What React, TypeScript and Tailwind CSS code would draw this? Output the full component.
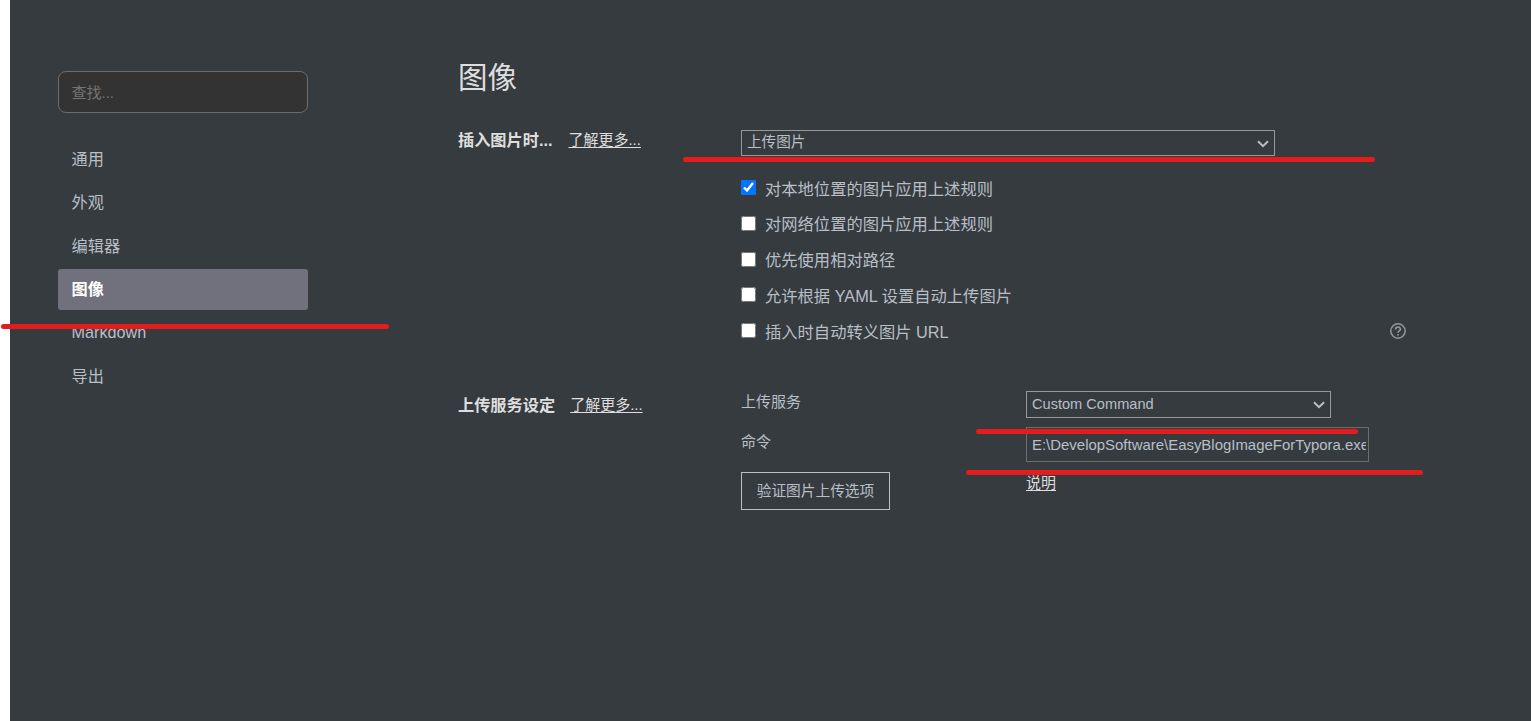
import { useState } from 'react';

const fontClass = "font-['Liberation_Sans','Noto_Sans_CJK_SC',sans-serif]";

const linkClass = 'text-[15px] leading-[20px] text-[#dedede] underline underline-offset-2';

const navItems = ['通用', '外观', '编辑器', '图像', 'Markdown', '导出'];

const imageRules = [
  { label: '对本地位置的图片应用上述规则', checked: true },
  { label: '对网络位置的图片应用上述规则', checked: false },
  { label: '优先使用相对路径', checked: false },
  { label: '允许根据 YAML 设置自动上传图片', checked: false },
  { label: '插入时自动转义图片 URL', checked: false, help: true }
];

// red marker strokes lying over the panel
const markers = [
  'left-[1px] top-[324px] w-[388px]',
  'left-[683px] top-[157px] w-[692px]',
  'left-[976px] top-[429px] w-[382px]',
  'left-[966px] top-[470px] w-[457px]'
];

function Chevron() {
  return (
    <svg className="mt-[2px] h-[8px] w-[12px] shrink-0" fill="none" viewBox="0 0 12 8">
      <path d="M1 1.2 L6 6.2 L11 1.2" stroke="#b8bfc6" strokeWidth="2" />
    </svg>
  );
}

function HelpIcon() {
  return (
    <svg className="size-4" fill="none" viewBox="0 0 16 16">
      <circle cx="8" cy="8" r="7.2" stroke="#93989d" strokeWidth="1.5" />
      <path
        d="M5.6 6.4 C5.6 3.2 10.4 3.2 10.4 6.2 C10.4 7.9 8 8 8 9.8"
        stroke="#93989d"
        strokeWidth="1.6"
      />
      <path d="M8 11 V12.6" stroke="#93989d" strokeWidth="1.6" />
    </svg>
  );
}

function Sidebar() {
  const [active, setActive] = useState('图像');

  return (
    <aside className="w-[250px] shrink-0 pt-[71px]">
      <input
        className="block h-[42px] w-full rounded-lg border border-[#6d6d6d] bg-[#333333] px-[12.5px] text-[15px] text-[#b8bfc6] outline-none placeholder:text-[#757575]"
        placeholder="查找..."
        type="text"
      />
      <nav className="mt-[26px] flex flex-col gap-[2.35px]">
        {navItems.map((item) => (
          <button
            className={`h-[41px] rounded-[3px] px-[13.6px] pb-[1px] text-left text-[16.2px] ${
              item === active ? 'bg-[#70717d] font-bold text-white' : 'text-[#b8bfc6]'
            }`}
            key={item}
            onClick={() => {
              setActive(item);
            }}
            type="button"
          >
            {item}
          </button>
        ))}
      </nav>
    </aside>
  );
}

export default function App() {
  return (
    <div className={`relative h-[721px] w-full overflow-hidden bg-white pl-[10px] text-[#b8bfc6] ${fontClass}`}>
      <div className="flex h-full bg-[#363b40] pl-[48px]">
        <Sidebar />

        <main className="ml-[150px] w-[960px] pt-[58px]">
          <h2 className="h-[72px] text-[29.5px] leading-[40px] text-[#dedede]">图像</h2>

          <section className="flex">
            <div className="flex w-[283px] shrink-0 items-start gap-[16px] self-start">
              <h3 className="text-[16.2px] leading-[21px] font-bold text-[#dedede]">插入图片时...</h3>
              <a className={linkClass}>了解更多...</a>
            </div>
            <div className="flex-1">
              <div className="flex h-[26px] w-[534px] items-center justify-between border border-[#96999c] pr-[5px] pl-[5px] text-[14.6px]">
                <span className="pb-[2px] leading-[22px]">上传图片</span>
                <Chevron />
              </div>
              <div className="mt-[15px]">
                {imageRules.map((rule) => (
                  <div className="flex h-[35.8px] items-center" key={rule.label}>
                    <label className="flex items-center gap-[9px] text-[16.3px]">
                      <input className="-mt-[2.6px] size-[15px]" defaultChecked={rule.checked} type="checkbox" />
                      {rule.label}
                    </label>
                    {rule.help && (
                      <span className="-mt-[2px] ml-auto mr-[12px]">
                        <HelpIcon />
                      </span>
                    )}
                  </div>
                ))}
              </div>
            </div>
          </section>

          <section className="mt-[41px] flex">
            <div className="mt-[4px] flex w-[283px] shrink-0 items-start gap-[15px] self-start">
              <h3 className="text-[16.2px] leading-[21px] font-bold text-[#dedede]">上传服务设定</h3>
              <a className={linkClass}>了解更多...</a>
            </div>
            <div className="w-[285px] shrink-0 text-[15px]">
              <p className="h-[40px] leading-[21px]">上传服务</p>
              <p className="h-[41px] leading-[21px]">命令</p>
              <button className="block h-[38px] w-[149px] border border-[#b8bfc6] text-[14.7px]" type="button">
                验证图片上传选项
              </button>
            </div>
            <div className="text-[15px]">
              <div className="flex h-[27px] w-[305px] items-center justify-between border border-[#96999c] px-[5px] text-[14.6px]">
                <span>Custom Command</span>
                <Chevron />
              </div>
              <input
                className="mt-[9px] block h-[35px] w-[343px] border border-[#6d6d6d] bg-transparent pr-[2px] pl-[5px] text-[14.95px] outline-none"
                defaultValue="E:\DevelopSoftware\EasyBlogImageForTypora.exe"
                type="text"
              />
              <a className={`mt-[11px] block w-fit ${linkClass}`}>说明</a>
            </div>
          </section>
        </main>
      </div>

      {markers.map((marker) => (
        <div className={`absolute h-[5px] rounded-full bg-[#e61b1b] ${marker}`} key={marker} />
      ))}
    </div>
  );
}
